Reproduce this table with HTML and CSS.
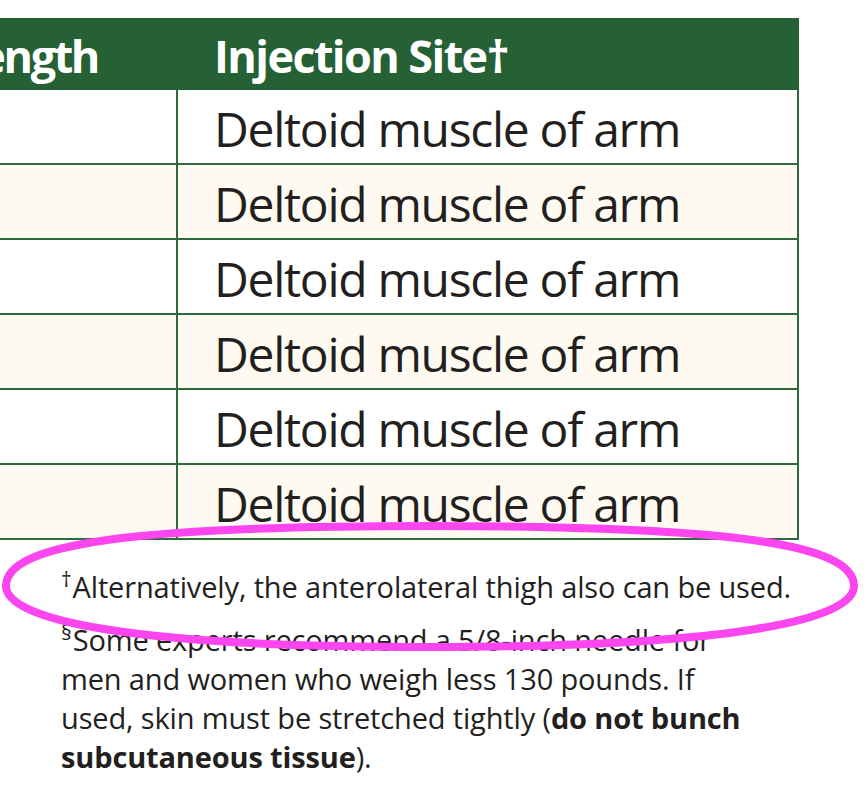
FILE: index.html
```html
<!DOCTYPE html>
<html lang="en">
<head>
<meta charset="utf-8">
<title>Injection Site</title>
<link rel="stylesheet" href="styles.css">
</head>
<body>
<div class="page">
  <div class="table">
    <div class="row head">
      <div class="cell c1"><span>Needle Length</span></div>
      <div class="cell c2">Injection Site†</div>
    </div>
    <div class="row">
      <div class="cell c1"></div>
      <div class="cell c2">Deltoid muscle of arm</div>
    </div>
    <div class="row cream">
      <div class="cell c1"></div>
      <div class="cell c2">Deltoid muscle of arm</div>
    </div>
    <div class="row">
      <div class="cell c1"></div>
      <div class="cell c2">Deltoid muscle of arm</div>
    </div>
    <div class="row cream">
      <div class="cell c1"></div>
      <div class="cell c2">Deltoid muscle of arm</div>
    </div>
    <div class="row">
      <div class="cell c1"></div>
      <div class="cell c2">Deltoid muscle of arm</div>
    </div>
    <div class="row cream">
      <div class="cell c1"></div>
      <div class="cell c2">Deltoid muscle of arm</div>
    </div>
  </div>
  <div class="notes">
    <p class="note"><sup>†</sup>Alternatively, the anterolateral thigh also can be used.</p>
    <p class="note"><sup>§</sup>Some experts recommend a 5/8-inch needle for<br>men and women who weigh less 130 pounds. If<br>used, skin must be stretched tightly (<b>do not bunch<br>subcutaneous tissue</b>).</p>
  </div>
  <svg class="mark" width="867" height="791" viewBox="0 0 867 791" aria-hidden="true">
    <path d="M 6 586 C 6 544 130 526 430 526 C 730 526 854 544 854 586 C 854 620 730 647 430 647 C 130 647 6 620 6 586 Z" fill="none" stroke="#fb45ef" stroke-width="8"/>
  </svg>
</div>
</body>
</html>
```
FILE: styles.css
```css
* { box-sizing: border-box; }
html, body { margin: 0; padding: 0; background: #ffffff; }
body { font-family: "Open Sans", "Noto Sans", sans-serif; color: #231f20; }

.page {
  position: relative;
  width: 867px;
  height: 791px;
  overflow: hidden;
  padding-top: 18px;
}

.table {
  width: 799px;
  display: flex;
  flex-direction: column;
}

.row {
  display: flex;
  height: 75px;
  border-bottom: 2px solid #2f6a3c;
  border-right: 2px solid #2f6a3c;
  background: #ffffff;
}
.row.cream { background: #fefaf1; }

.row.head {
  height: 72px;
  background: #256135;
  border: none;
  color: #ffffff;
  font-weight: 700;
  font-size: 45px;
  letter-spacing: -1.6px;
}

.cell { display: flex; align-items: center; }
.c1 {
  width: 176px;
  flex: none;
  overflow: hidden;
  justify-content: flex-end;
  padding-right: 78px;
  white-space: nowrap;
}
.c2 {
  flex: 1;
  border-left: 2px solid #2f6a3c;
  padding-left: 36px;
  padding-top: 4px;
  font-size: 48px;
  letter-spacing: -1.3px;
  white-space: nowrap;
}
.head .c2 { border-left: none; padding-left: 38px; font-size: 45px; letter-spacing: -1.6px; padding-top: 2px; }
.head .c1 { padding-top: 2px; letter-spacing: -2.4px; }

.notes {
  padding-left: 61px;
  padding-top: 27px;
  font-size: 29px;
  line-height: 39px;
  letter-spacing: -0.15px;
}
.note { margin: 0 0 14px 0; }
.note sup {
  font-size: 21px;
  line-height: 0;
  vertical-align: 11px;
  margin-right: 1px;
}
.note b { font-weight: 700; }

.mark {
  position: absolute;
  left: 0;
  top: 0;
  pointer-events: none;
}
```
